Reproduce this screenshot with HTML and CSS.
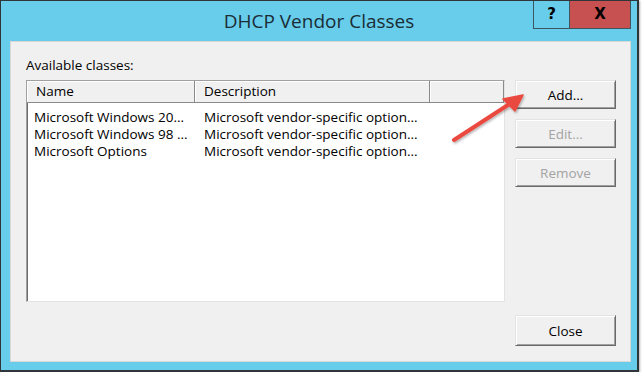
FILE: index.html
```html
<!DOCTYPE html>
<html lang="en">
<head>
    <meta charset="UTF-8">
    <title>DHCP Vendor Classes</title>
    <link rel="stylesheet" href="styles.css">
</head>
<body>
    <div class="window">
        <div class="titlebar">
            <span></span>
            <span class="title">DHCP Vendor Classes</span>
            <div class="caption-buttons">
                <span class="cap-btn help">?</span>
                <span class="cap-btn close">X</span>
            </div>
        </div>
        <div class="client">
            <div class="left">
                <div class="label">Available classes:</div>
                <div class="listbox">
                    <div class="header">
                        <div class="col name">Name</div>
                        <div class="col desc">Description</div>
                        <div class="col rest"></div>
                    </div>
                    <div class="rows">
                        <div class="row"><span class="name">Microsoft Windows 20...</span><span class="desc">Microsoft vendor-specific option...</span></div>
                        <div class="row"><span class="name">Microsoft Windows 98 ...</span><span class="desc">Microsoft vendor-specific option...</span></div>
                        <div class="row"><span class="name">Microsoft Options</span><span class="desc">Microsoft vendor-specific option...</span></div>
                    </div>
                </div>
            </div>
            <div class="right">
                <button class="btn">Add...</button>
                <button class="btn" disabled>Edit...</button>
                <button class="btn" disabled>Remove</button>
                <button class="btn bottom">Close</button>
            </div>
        </div>
        <!-- annotation arrow drawn over the dialog -->
        <svg class="arrow" width="644" height="374" viewBox="0 0 644 374">
            <g fill="#ea4a40" stroke="#ea4a40" filter="url(#shadow)">
                <line x1="454" y1="140" x2="511" y2="103" stroke-width="4" stroke-linecap="round"/>
                <polygon points="523,95 503,99 515,111" stroke-width="1.5" stroke-linejoin="round"/>
            </g>
            <defs>
                <filter id="shadow" x="-20%" y="-20%" width="140%" height="140%">
                    <feDropShadow dx="1" dy="1.5" stdDeviation="1" flood-color="#000" flood-opacity="0.3"/>
                </filter>
            </defs>
        </svg>
    </div>
</body>
</html>
```

FILE: styles.css
```css
body {
    margin: 0;
    background: #ffffff;
    font-family: "Open Sans", "Noto Sans", sans-serif;
    font-size: 13.5px;
    color: #000;
}

.window {
    position: relative;
    width: 636px;
    height: 369px;
    border: 1px solid #2f3538;
    border-right-width: 2px;
    border-bottom-width: 2px;
    background: #67cdea;
    box-shadow: 1px 1px 2px rgba(0, 0, 0, 0.3);
    display: flex;
    flex-direction: column;
}

.titlebar {
    height: 40px;
    display: grid;
    grid-template-columns: 1fr auto 1fr;
    align-items: start;
}

.title {
    font-size: 19px;
    line-height: 40px;
    color: #1b2c36;
}

.caption-buttons {
    justify-self: end;
    display: flex;
    margin-right: 6px;
}

.cap-btn {
    height: 27px;
    line-height: 27px;
    text-align: center;
    font-family: "DejaVu Sans", sans-serif;
    font-weight: bold;
    font-size: 15px;
    color: #000;
    border: 1px solid #3c5560;
    border-top: none;
}

.help {
    width: 35px;
    border-right: none;
}

.close {
    width: 60px;
    background: #c75050;
}

.client {
    margin: 0 6px 8px 9px;
    flex: 1;
    background: #f0f0f0;
    border: 1px solid #d8d8d8;
    padding: 15px 13px 15px 15px;
    display: flex;
    gap: 10px;
}

.left {
    width: 479px;
    display: flex;
    flex-direction: column;
}

.label {
    line-height: 17px;
    margin-bottom: 6px;
}

.listbox {
    height: 222px;
    box-sizing: border-box;
    background: #fff;
    border-top: 1px solid #a0a0a0;
    border-left: 1px solid #a0a0a0;
    border-right: 1px solid #e3e3e3;
    border-bottom: 1px solid #e3e3e3;
    box-shadow: inset 1px 0 #6d6d6d;
}

.header {
    display: flex;
    height: 22px;
    background: #f0f0f0;
}

.header .col {
    box-sizing: border-box;
    border-right: 1px solid #8a8a8a;
    border-bottom: 1px solid #8a8a8a;
    box-shadow: inset 1px 1px #fff;
    line-height: 21px;
}

.header .name {
    width: 168px;
    padding-left: 9px;
}

.header .desc {
    width: 235px;
    padding-left: 9px;
}

.header .rest {
    flex: 1;
}

.rows {
    padding-top: 6px;
}

.row {
    display: flex;
    line-height: 17px;
}

.row .name {
    width: 170px;
    padding-left: 7px;
}

.row .desc {
    flex: 1;
}

.right {
    width: 101px;
    padding-top: 23px;
    display: flex;
    flex-direction: column;
    gap: 10px;
}

.btn {
    height: 29px;
    font-family: "Open Sans", "Noto Sans", sans-serif;
    font-size: 13.5px;
    color: #000;
    background: #f0f0f0;
    border-top: 1px solid #e3e3e3;
    border-left: 1px solid #e3e3e3;
    border-right: 1px solid #696969;
    border-bottom: 1px solid #696969;
    box-shadow: inset 1px 1px #fff, inset -1px -1px #a0a0a0;
    padding: 0;
}

.btn:disabled {
    color: #a3a3a3;
}

.btn.bottom {
    margin-top: auto;
    height: 31px;
}

.arrow {
    position: absolute;
    left: -1px;
    top: -1px;
    pointer-events: none;
}
```
